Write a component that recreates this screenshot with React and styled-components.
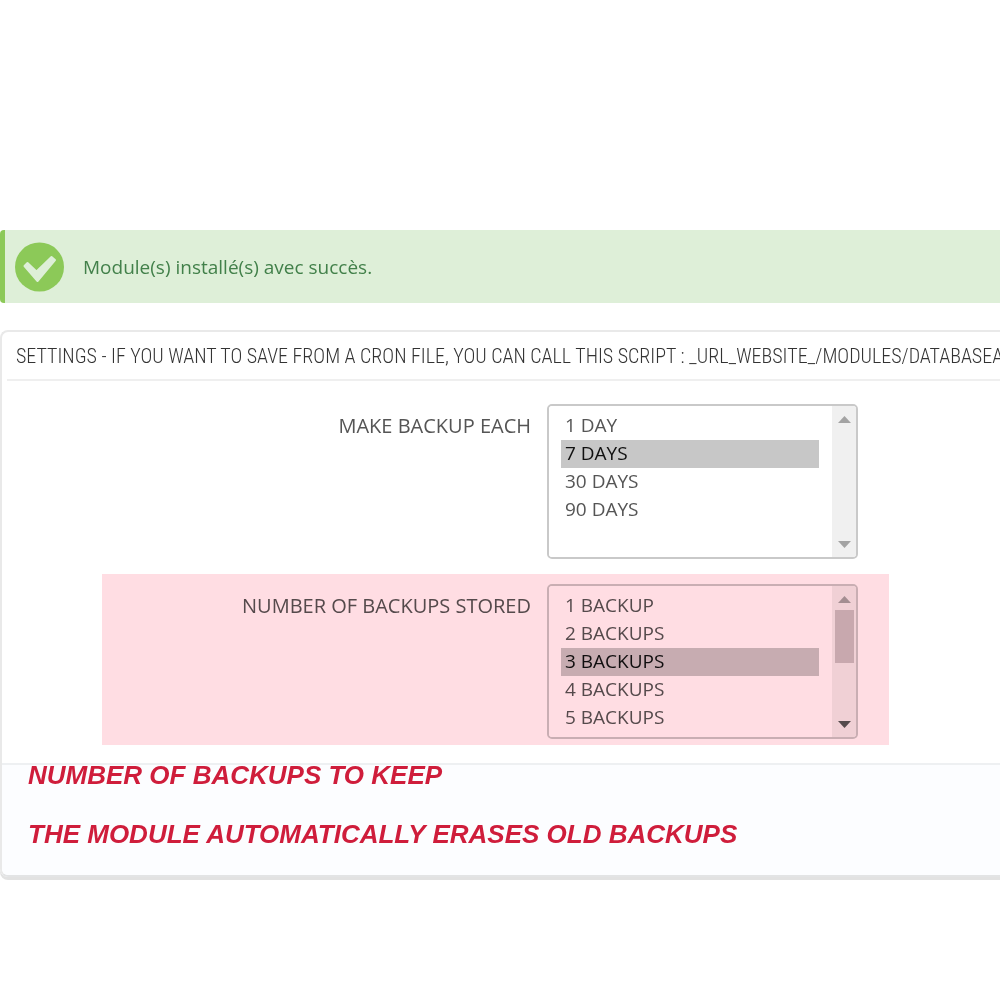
import React, { useState } from 'react';
import styled, { createGlobalStyle } from 'styled-components';

const GlobalStyle = createGlobalStyle`
  * { box-sizing: border-box; }
  body {
    margin: 0;
    background: #fff;
    color: #555;
    font-family: 'Open Sans', sans-serif;
    overflow-x: hidden;
  }
`;

const Page = styled.main`
  padding: 230px 0 120px;
`;

const Alert = styled.div`
  display: flex;
  align-items: center;
  gap: 18px;
  height: 73px;
  padding-left: 10px;
  border-left: 5px solid #8cc958;
  border-radius: 4px 0 0 4px;
  background: #deefd8;
  color: #42804a;
  font-size: 19px;
`;

const Panel = styled.form`
  margin-top: 27px;
  border: 2px solid #e9e9e9;
  border-right: 0;
  border-radius: 8px 0 0 8px;
  border-bottom-color: #e3e4e5;
  box-shadow: 0 3px 0 #e2e2e2;
  overflow: hidden;
`;

const Heading = styled.h3`
  height: 49px;
  margin: 0 0 0 5px;
  padding-left: 9px;
  border-bottom: 2px solid #efefef;
  overflow: hidden;
  color: #333;
  font-family: 'Ubuntu Condensed', 'Roboto Condensed', sans-serif;
  font-size: 20px;
  font-weight: 300;
  line-height: 48px;
  white-space: nowrap;
`;

const Fields = styled.div`
  display: grid;
  gap: 9px;
  padding: 13px 111px 18px 100px;
`;

const Row = styled.div`
  position: relative;
  display: grid;
  grid-template-columns: minmax(0, 1fr) 311px;
  gap: 16px;
  padding: 10px 31px 6px 0;

  &::after {
    content: '';
    display: ${(p) => (p.$marked ? 'block' : 'none')};
    position: absolute;
    inset: 0;
    background: #ffdde3;
    mix-blend-mode: multiply;
    pointer-events: none;
  }
`;

const Label = styled.label`
  padding-top: 8px;
  font-size: 20px;
  line-height: 28px;
  text-align: right;
`;

const ListBox = styled.div`
  display: flex;
  height: 155px;
  border: 2px solid #c9c9c9;
  border-radius: 5px;
  overflow: hidden;
`;

const Select = styled.select`
  flex: 1;
  min-width: 0;
  margin: 0;
  padding: 6px 13px 5px 12px;
  border: 0;
  outline: 0;
  background: #fff;
  color: #555;
  font-family: inherit;
  font-size: 19px;
  overflow: hidden;
  scrollbar-width: none;

  option {
    height: 28px;
    min-height: 28px;
    padding: 0 4px;
    line-height: 28px;
  }

  option:checked {
    background: linear-gradient(#c7c7c7, #c7c7c7);
  }
`;

const ScrollBar = styled.div`
  display: flex;
  flex-direction: column;
  align-items: center;
  width: 24px;
  padding: 10px 0 9px;
  background: #f0f0f0;
`;

const Thumb = styled.div`
  flex: none;
  width: 19px;
  height: 53px;
  margin-top: 7px;
  background: #c8c2c4;
`;

const Arrow = styled.svg`
  flex: none;
  display: block;
  width: 13px;
  height: 7px;
  fill: ${(p) => (p.$dark ? '#555' : '#a3a3a3')};
  margin-top: ${(p) => (p.$down ? 'auto' : '0')};
`;

const Footer = styled.div`
  display: grid;
  gap: 39px;
  padding: 0 26px 31px;
  border-top: 2px solid #eef0f2;
  background: #fcfdff;
`;

const Note = styled.p`
  margin: 0;
  color: #cf1d3b;
  font-family: 'Liberation Sans', sans-serif;
  font-size: 26px;
  font-style: italic;
  font-weight: 700;
  line-height: 20px;
  white-space: nowrap;
`;

const days = ['1 DAY', '7 DAYS', '30 DAYS', '90 DAYS'];
const backups = ['1 BACKUP', '2 BACKUPS', '3 BACKUPS', '4 BACKUPS', '5 BACKUPS'];

const CheckIcon = () => (
  <svg width="50" height="50" viewBox="0 0 50 50" aria-hidden="true">
    <circle cx="24.5" cy="25" r="24.5" fill="#8cc958" />
    <path
      d="M9.5 24L12.5 21 21.5 29.5 36.5 15 40 18 22.5 39z"
      fill="#deefd8"
      stroke="#deefd8"
      strokeWidth="2"
      strokeLinejoin="round"
    />
  </svg>
);

const Field = ({ id, label, options, initial, scrolls }) => {
  const [value, setValue] = useState([initial]);

  const onChange = (e) => {
    setValue(Array.from(e.target.selectedOptions, (o) => o.value));
  };

  return (
    <Row $marked={scrolls}>
      <Label htmlFor={id}>{label}</Label>
      <ListBox>
        <Select id={id} multiple size={5} value={value} onChange={onChange}>
          {options.map((o) => (
            <option key={o} value={o}>{o}</option>
          ))}
        </Select>
        <ScrollBar aria-hidden="true">
          <Arrow viewBox="0 0 13 7"><path d="M0 7L6.5 0 13 7z" /></Arrow>
          {scrolls && <Thumb />}
          <Arrow viewBox="0 0 13 7" $down $dark={scrolls}><path d="M0 0h13L6.5 7z" /></Arrow>
        </ScrollBar>
      </ListBox>
    </Row>
  );
};

const App = () => (
  <>
    <GlobalStyle />
    <Page>
      <Alert role="status">
        <CheckIcon />
        Module(s) installé(s) avec succès.
      </Alert>
      <Panel>
        <Heading>
          SETTINGS - IF YOU WANT TO SAVE FROM A CRON FILE, YOU CAN CALL THIS SCRIPT : _URL_WEBSITE_/MODULES/DATABASEA
        </Heading>
        <Fields>
          <Field id="each" label="MAKE BACKUP EACH" options={days} initial="7 DAYS" />
          <Field id="stored" label="NUMBER OF BACKUPS STORED" options={backups} initial="3 BACKUPS" scrolls />
        </Fields>
        <Footer>
          <Note>NUMBER OF BACKUPS TO KEEP</Note>
          <Note>THE MODULE AUTOMATICALLY ERASES OLD BACKUPS</Note>
        </Footer>
      </Panel>
    </Page>
  </>
);

export default App;
